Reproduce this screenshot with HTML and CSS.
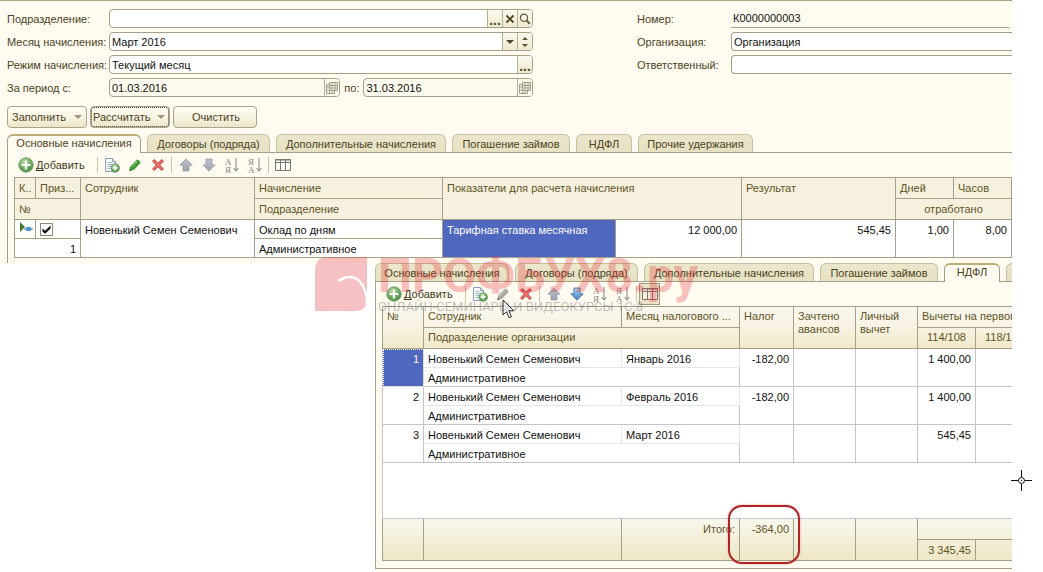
FILE: index.html
```html
<!DOCTYPE html>
<html lang="ru">
<head>
<meta charset="utf-8">
<title>Начисление зарплаты</title>
<link rel="stylesheet" href="styles.css">
</head>
<body>
<svg class="defs" width="0" height="0" aria-hidden="true">
  <defs>
    <radialGradient id="g-green" cx="40%" cy="30%" r="75%"><stop offset="0" stop-color="#b9dca2"/><stop offset=".6" stop-color="#68a85c"/><stop offset="1" stop-color="#4b8a48"/></radialGradient>
    <linearGradient id="g-grey" x1="0" y1="0" x2="0" y2="1"><stop offset="0" stop-color="#bdc1cb"/><stop offset="1" stop-color="#9ea3ae"/></linearGradient>
    <linearGradient id="g-blue" x1="0" y1="0" x2="0" y2="1"><stop offset="0" stop-color="#b9dbf5"/><stop offset="1" stop-color="#3f7fc4"/></linearGradient>
    <symbol id="i-add" viewBox="0 0 16 16"><circle cx="8" cy="8" r="7.2" fill="url(#g-green)" stroke="#6f9a66" stroke-width=".9"/><path d="M8 3.6v8.8M3.6 8h8.8" stroke="#fff" stroke-width="2.2"/></symbol>
    <symbol id="i-copy" viewBox="0 0 16 16"><path d="M1.5 1.5h7l3 3v10h-10z" fill="#f4f8fc" stroke="#8ba0b8"/><path d="M8.5 1.5v3h3" fill="#fff" stroke="#8ba0b8"/><path d="M3.5 5.5h4M3.5 7.5h6M3.5 9.5h5M3.5 11.5h3" stroke="#9db4cc"/><circle cx="11.2" cy="11" r="4.3" fill="url(#g-green)" stroke="#5e9256" stroke-width=".7"/><path d="M11.2 8.4v5.2M8.6 11h5.2" stroke="#fff" stroke-width="1.5"/></symbol>
    <symbol id="i-pencil" viewBox="0 0 16 16"><path d="M2.500 14l.7-4.300L9.400 2.900c1.800-.8 4.200 1.400 3.900 3.300L7 12.800z" fill="currentColor"/><path d="M4.800 9.600l5.400-5.600" stroke="#fff" stroke-opacity=".4" stroke-width="1.2"/><path d="M2.500 14l.4-2.300 1.900 1.700z" fill="#3f4a2a"/></symbol>
    <symbol id="i-del" viewBox="0 0 16 16"><path d="M3.2 3.2l9.6 9.8M12.8 3.2l-9.6 9.8" stroke="#cf4848" stroke-width="3.2"/><path d="M3.8 3.8l8.5 8.6M12.2 3.8l-8.5 8.6" stroke="#f3827b" stroke-width="1.1"/></symbol>
    <symbol id="i-up" viewBox="0 0 16 16"><path d="M8 1.8l6 6.4h-3V14H5V8.2H2z" fill="url(#g-grey)" stroke="#989daa" stroke-width=".8"/></symbol>
    <symbol id="i-down" viewBox="0 0 16 16"><path d="M8 14.2L2 7.8h3V2h6v5.8h3z" fill="url(#g-grey)" stroke="#989daa" stroke-width=".8"/></symbol>
    <symbol id="i-down-on" viewBox="0 0 16 16"><path d="M8 14.2L2 7.8h3V2h6v5.8h3z" fill="url(#g-blue)" stroke="#3a6ea8" stroke-width=".9"/></symbol>
    <symbol id="i-az" viewBox="0 0 16 16"><text x="1" y="7.5" class="az">А</text><text x="1" y="15.5" class="az">Я</text><path d="M12 1v12.5M9.6 11l2.4 3 2.4-3" fill="none" stroke="#9a9a98" stroke-width="1.2"/></symbol>
    <symbol id="i-za" viewBox="0 0 16 16"><text x="1" y="7.5" class="az">Я</text><text x="1" y="15.5" class="az">А</text><path d="M12 1v12.5M9.6 11l2.4 3 2.4-3" fill="none" stroke="#9a9a98" stroke-width="1.2"/></symbol>
    <symbol id="i-grid" viewBox="0 0 16 16"><path d="M.5 2.5h15v11H.5zM.5 5.5h15M5.5 2.5v11M10.5 2.5v11" fill="#fff" fill-opacity=".5" stroke="currentColor"/><path d="M.5 3h15" stroke="currentColor"/></symbol>
    <symbol id="i-cal" viewBox="0 0 12 12"><path d="M3.5.5h8v8h-8zM3.5 3.5h8M3.5 6h8M6 .5v8M9 .5v8M3.5 2.5h-3v9h8v-3M.5 5h3M.5 8h3M3.5 8.5v3M6 8.5v3" fill="none" stroke="#a19c86"/></symbol>
    <symbol id="i-lens" viewBox="0 0 12 12"><circle cx="5" cy="4.8" r="3.6" fill="#fffef8" stroke="#5e5830" stroke-width="1.2"/><path d="M7.6 7.4l3.2 3.4" stroke="#5e5830" stroke-width="1.9"/></symbol>
    <symbol id="i-x" viewBox="0 0 12 12"><path d="M2.5 2.5l7 7M9.5 2.5l-7 7" stroke="#4e4820" stroke-width="1.9"/></symbol>
    <symbol id="i-drop" viewBox="0 0 12 12"><path d="M2 4h8L6 8z" fill="currentColor"/></symbol>
    <symbol id="i-spin" viewBox="0 0 12 12"><path d="M3 4l3-3 3 3zM3 8l3 3 3-3z" fill="#5e5830"/></symbol>
  </defs>
</svg>

<main class="screen">
  <section class="doc">
    <form class="form">
      <div class="col">
        <div class="row"><label for="dep">Подразделение:</label>
          <div class="field"><input id="dep" type="text"><button type="button" class="dots" aria-label="Выбрать">...</button><button type="button" aria-label="Очистить"><svg><use href="#i-x"/></svg></button><button type="button" aria-label="Открыть"><svg><use href="#i-lens"/></svg></button></div></div>
        <div class="row"><label for="month">Месяц начисления:</label>
          <div class="field"><input id="month" type="text" value="Март 2016"><button type="button" class="dark" aria-label="Список"><svg><use href="#i-drop"/></svg></button><button type="button" aria-label="Изменить"><svg><use href="#i-spin"/></svg></button></div></div>
        <div class="row"><label for="mode">Режим начисления:</label>
          <div class="field"><input id="mode" type="text" value="Текущий месяц"><button type="button" class="dots" aria-label="Выбрать">...</button></div></div>
        <div class="row"><label for="from">За период с:</label>
          <div class="period">
            <div class="field ro"><input id="from" type="text" value="01.03.2016"><button type="button" aria-label="Календарь"><svg><use href="#i-cal"/></svg></button></div>
            <label for="to">по:</label>
            <div class="field ro last"><input id="to" type="text" value="31.03.2016"><button type="button" aria-label="Календарь"><svg><use href="#i-cal"/></svg></button></div>
          </div></div>
      </div>
      <div class="col right">
        <div class="row"><label for="num">Номер:</label><div class="field line"><input id="num" type="text" value="К0000000003"></div></div>
        <div class="row"><label for="org">Организация:</label><div class="field cut"><input id="org" type="text" value="Организация"></div></div>
        <div class="row"><label for="resp">Ответственный:</label><div class="field cut"><input id="resp" type="text"></div></div>
      </div>
    </form>

    <div class="actions">
      <button type="button" class="btn">Заполнить<svg><use href="#i-drop"/></svg></button>
      <button type="button" class="btn focus">Рассчитать<svg><use href="#i-drop"/></svg></button>
      <button type="button" class="btn clear">Очистить</button>
    </div>

    <nav class="tabs inset">
      <button type="button" class="tab on w1">Основные начисления</button>
      <button type="button" class="tab w2">Договоры (подряда)</button>
      <button type="button" class="tab w3">Дополнительные начисления</button>
      <button type="button" class="tab w4">Погашение займов</button>
      <button type="button" class="tab w5">НДФЛ</button>
      <button type="button" class="tab w6">Прочие удержания</button>
    </nav>
    <div class="pane first">
      <div class="tools">
        <button type="button" class="add"><svg><use href="#i-add"/></svg><span><u>Д</u>обавить</span></button>
        <i class="sep"></i>
        <button type="button" aria-label="Скопировать"><svg><use href="#i-copy"/></svg></button>
        <button type="button" class="green" aria-label="Изменить"><svg><use href="#i-pencil"/></svg></button>
        <button type="button" aria-label="Удалить"><svg><use href="#i-del"/></svg></button>
        <i class="sep"></i>
        <button type="button" aria-label="Вверх"><svg><use href="#i-up"/></svg></button>
        <button type="button" aria-label="Вниз"><svg><use href="#i-down"/></svg></button>
        <button type="button" aria-label="По возрастанию"><svg><use href="#i-az"/></svg></button>
        <button type="button" aria-label="По убыванию"><svg><use href="#i-za"/></svg></button>
        <i class="sep"></i>
        <button type="button" class="slate" aria-label="Настройка списка"><svg><use href="#i-grid"/></svg></button>
      </div>
      <table class="grid accruals">
        <colgroup><col class="c21"><col class="c45"><col class="c174"><col class="c188"><col class="c173"><col><col class="c154"><col class="c58"><col class="c58"></colgroup>
        <thead>
          <tr><th>К..</th><th>Приз...</th><th rowspan="2">Сотрудник</th><th>Начисление</th><th rowspan="2" colspan="2">Показатели для расчета начисления</th><th rowspan="2">Результат</th><th>Дней</th><th>Часов</th></tr>
          <tr><th colspan="2">№</th><th>Подразделение</th><th colspan="2" class="mid">отработано</th></tr>
        </thead>
        <tbody>
          <tr><td class="mark"><svg viewBox="0 0 15 12"><path d="M1 0v10l5-5z" fill="#3f7a35"/><path d="M5 7h9" stroke="#4a6f94"/><ellipse cx="9.5" cy="7" rx="3" ry="2.2" fill="#4e94cf"/></svg></td><td class="mark"><input type="checkbox" checked aria-label="Признак"></td><td rowspan="2">Новенький Семен Семенович</td><td>Оклад по дням</td><td rowspan="2" class="sel">Тарифная ставка месячная</td><td rowspan="2" class="num plain">12 000,00</td><td rowspan="2" class="num">545,45</td><td rowspan="2" class="num">1,00</td><td rowspan="2" class="num">8,00</td></tr>
          <tr><td colspan="2" class="num">1</td><td>Административное</td></tr>
        </tbody>
      </table>
    </div>
  </section>

  <section class="doc overlay">
    <nav class="tabs">
      <button type="button" class="tab w1">Основные начисления</button>
      <button type="button" class="tab w2">Договоры (подряда)</button>
      <button type="button" class="tab w3">Дополнительные начисления</button>
      <button type="button" class="tab w4">Погашение займов</button>
      <button type="button" class="tab on w5">НДФЛ</button>
      <button type="button" class="tab w6" aria-label="Прочие удержания"></button>
    </nav>
    <div class="pane second">
      <div class="tools">
        <button type="button" class="add"><svg><use href="#i-add"/></svg><span><u>Д</u>обавить</span></button>
        <i class="sep"></i>
        <button type="button" aria-label="Скопировать"><svg><use href="#i-copy"/></svg></button>
        <button type="button" class="dim" aria-label="Изменить"><svg><use href="#i-pencil"/></svg></button>
        <button type="button" aria-label="Удалить"><svg><use href="#i-del"/></svg></button>
        <i class="sep"></i>
        <button type="button" aria-label="Вверх"><svg><use href="#i-up"/></svg></button>
        <button type="button" aria-label="Вниз"><svg><use href="#i-down-on"/></svg></button>
        <button type="button" aria-label="По возрастанию"><svg><use href="#i-az"/></svg></button>
        <button type="button" aria-label="По убыванию"><svg><use href="#i-za"/></svg></button>
        <i class="sep"></i>
        <button type="button" class="slate pressed" aria-label="Настройка списка"><svg><use href="#i-grid"/></svg></button>
      </div>
      <table class="grid tax">
        <colgroup><col class="c41"><col class="c198"><col class="c118"><col class="c54"><col class="c62"><col class="c62"><col class="c58"><col></colgroup>
        <thead>
          <tr><th rowspan="2">№</th><th>Сотрудник</th><th>Месяц налогового ...</th><th rowspan="2">Налог</th><th rowspan="2">Зачтено авансов</th><th rowspan="2">Личный вычет</th><th colspan="2" class="open">Вычеты на первог</th></tr>
          <tr><th colspan="2">Подразделение организации</th><th class="mid">114/108</th><th class="open code">118/1</th></tr>
        </thead>
        <tbody>
          <tr><td rowspan="2" class="num sel dotted">1</td><td class="soft">Новенький Семен Семенович</td><td class="soft">Январь 2016</td><td rowspan="2" class="num">-182,00</td><td rowspan="2"></td><td rowspan="2"></td><td rowspan="2" class="num">1 400,00</td><td rowspan="2" class="open"></td></tr>
          <tr><td colspan="2">Административное</td></tr>
          <tr><td rowspan="2" class="num">2</td><td class="soft">Новенький Семен Семенович</td><td class="soft">Февраль 2016</td><td rowspan="2" class="num">-182,00</td><td rowspan="2"></td><td rowspan="2"></td><td rowspan="2" class="num">1 400,00</td><td rowspan="2" class="open"></td></tr>
          <tr><td colspan="2">Административное</td></tr>
          <tr><td rowspan="2" class="num">3</td><td class="soft">Новенький Семен Семенович</td><td class="soft">Март 2016</td><td rowspan="2"></td><td rowspan="2"></td><td rowspan="2"></td><td rowspan="2" class="num">545,45</td><td rowspan="2" class="open"></td></tr>
          <tr><td colspan="2">Административное</td></tr>
          <tr class="blank"><td colspan="8" class="open"></td></tr>
        </tbody>
        <tfoot>
          <tr><td rowspan="2"></td><td rowspan="2"></td><td rowspan="2" class="num total">Итого:</td><td rowspan="2" class="num ringed">-364,00<span class="ring"></span></td><td rowspan="2"></td><td rowspan="2"></td><td colspan="2" class="open"></td></tr>
          <tr><td class="num">3 345,45</td><td class="open"></td></tr>
        </tfoot>
      </table>
    </div>
    <svg class="pointer" viewBox="0 0 13 20"><path d="M1 1v15l3.500-3.300 2.600 6 2.400-1-2.600-5.900h4.800z" fill="#fff" stroke="#222"/></svg>
  </section>

  <div class="brand">
    <svg viewBox="0 0 52 54"><path d="M13 0h39v42q0 12-12 12H0V14Q0 0 13 0z" fill="#e2262e"/><path d="M23 24q16-10 25 5q4 8 4 18" fill="none" stroke="#fff" stroke-width="2.5"/></svg>
    <div><strong>ПРОФБУХ8.ру</strong><span>ОНЛАЙН-СЕМИНАРЫ И ВИДЕОКУРСЫ 1С:8</span></div>
  </div>
  <svg class="cross" viewBox="0 0 21 21"><path d="M10.500 0v7M10.500 14v7M0 10.500h7M14 10.500h7" stroke="#111" stroke-width="1"/><circle cx="10.500" cy="10.500" r="3" fill="#fff" stroke="#111"/><circle cx="10.500" cy="10.500" r=".7"/></svg>
</main>
</body>
</html>
```

FILE: styles.css
```css
* { box-sizing: border-box; }
body {
  margin: 0;
  background: #fff;
  color: #111;
  font: 11px/14px "Liberation Sans", Arial, sans-serif;
}
button, input { font: inherit; color: inherit; }
button { margin: 0; padding: 0; border: 0; background: none; }
svg { display: block; flex: none; }
u { text-decoration-skip-ink: none; }
.defs { position: absolute; }
.az { font: 9px "Liberation Serif", serif; fill: #858585; }

.screen { position: relative; padding-right: 31px; overflow: hidden; }
.doc { background: #fffbf0; }
.doc:first-child { border-top: 1px solid #a9a284; }

/* Form */
.form {
  display: grid;
  grid-template-columns: 526fr 375fr;
  gap: 104px;
  padding: 8px 0 0 7px;
  color: #4a431c;
}
.col { display: grid; gap: 4px; align-content: start; min-width: 0; }
.row { display: grid; grid-template-columns: 102px minmax(0, 1fr); align-items: center; white-space: nowrap; }
.right .row { grid-template-columns: 94px minmax(0, 1fr); }
.field {
  display: flex;
  height: 19px;
  overflow: hidden;
  border: 1px solid #a5a087;
  border-radius: 4px;
  background: #fff;
}
.field input {
  flex: 1;
  min-width: 0;
  padding: 0 2px;
  border: 0;
  outline: 0;
  background: none;
  color: #111;
}
.field button {
  display: grid;
  place-items: center;
  width: 15px;
  border-left: 1px solid #b5b094;
  background: linear-gradient(#fbf9ee, #eeead0);
  color: #4e4820;
}
.field svg { width: 12px; height: 12px; }
.field .dots { padding-top: 3px; font-size: 14px; font-weight: bold; }
.field.ro, .field.ro button { background: #fdfaee; }
.field.cut { border-right: 0; border-radius: 4px 0 0 4px; }
.field.line { margin-right: 3px; border-width: 0 0 1px; border-radius: 0; background: none; }
.period { display: grid; grid-template-columns: minmax(0, 232fr) auto minmax(0, 170fr); gap: 4px; align-items: center; }

.actions { display: flex; gap: 3px; padding: 9px 0 6px 7px; }
.btn {
  display: flex;
  align-items: center;
  justify-content: space-between;
  width: 80px;
  height: 22px;
  padding: 0 2px 0 4px;
  border: 1px solid #aaa58a;
  border-radius: 4px;
  background: linear-gradient(#fffdf6, #f7f3e0 55%, #ebe5c8);
  color: #4a431c;
}
.btn svg { width: 12px; height: 12px; color: #9c977c; }
.btn.focus { padding-left: 2px; outline: 1px dotted #333; outline-offset: -2px; }
.btn.clear { width: 84px; justify-content: center; }

/* Tabs */
.tabs {
  display: flex;
  gap: 6px;
  height: 19px;
  border-bottom: 1px solid #a5a087;
  clip-path: inset(0);
}
.tabs.inset { margin-left: 7px; }
.tab {
  flex: none;
  height: 18px;
  border: 1px solid #c6c0a0;
  border-bottom: 0;
  border-radius: 6px 6px 0 0;
  background: linear-gradient(#ebe7cd, #e6e1c2);
  color: #4a431c;
}
.tab.on { height: 19px; padding-bottom: 3px; border-color: #a5a087; border-top: 2px solid #bcae74; background: #fffbf0; }
.w1 { width: 134px; }
.w2 { width: 123px; }
.w3 { width: 170px; }
.w4 { width: 118px; }
.w5 { width: 56px; }
.w6 { width: 115px; }

/* Command bars */
.pane { border-left: 1px solid #a5a087; padding-left: 6px; }
.first { margin-left: 7px; padding-bottom: 5px; }
.tools { display: flex; align-items: center; height: 24px; }
.tools button { display: grid; place-items: center; width: 23px; height: 22px; }
.tools svg { width: 16px; height: 16px; }
.tools .add { display: flex; gap: 2px; width: 81px; padding-left: 4px; color: #3f3817; }
.sep { width: 1px; height: 16px; margin: 0 2px; background: #cbc5aa; }
.green { color: #3d9a2e; }
.dim { color: #a3a79c; }
.slate { color: #77786f; }
.tools .pressed { width: 21px; border: 1px solid #a5997d; background: #e9e2c6; color: #8b6d68; }

/* Tables */
.grid { width: 100%; border-collapse: collapse; table-layout: fixed; }
.grid th, .grid td {
  height: 19px;
  padding: 3px 4px 0;
  border: 1px solid #a5a087;
  overflow: hidden;
  vertical-align: top;
  text-align: left;
  font-weight: normal;
  white-space: nowrap;
}
.grid th { height: 21px; color: #5e5424; }
.grid tbody { background: #fff; }
.accruals thead { background: #f6f1df; }
.tax thead { background: linear-gradient(#f9f8f0, #f8f2e2 50%, #efe8c8); }
.grid tfoot { background: linear-gradient(#f8f8ee, #f3efd8 50%, #ede6c6); color: #5e5424; }
.grid .mid { text-align: center; }
.grid .num { text-align: right; }
.grid .sel { background: #5067c0; color: #fff; }
.grid .plain { border-left: 0; }
.grid .mark { padding: 2px 4px 0; }
.mark svg { width: 15px; height: 12px; }
.mark input {
  display: grid;
  place-items: center;
  appearance: none;
  width: 13px;
  height: 13px;
  margin: 1px 0 0;
  border: 1px solid #8e8a76;
  background: #fff;
}
.mark input::before {
  content: "";
  width: 9px;
  height: 9px;
  background: #111;
  clip-path: polygon(5% 40%, 35% 65%, 95% 5%, 95% 38%, 35% 98%, 5% 72%);
}
.c21 { width: 21px; } .c41 { width: 41px; } .c45 { width: 45px; }
.c54 { width: 54px; } .c58 { width: 58px; } .c62 { width: 62px; }
.c118 { width: 118px; } .c154 { width: 154px; } .c173 { width: 173px; }
.c174 { width: 174px; } .c188 { width: 188px; } .c198 { width: 198px; }

.overlay { position: relative; margin-left: 375px; padding-bottom: 2px; overflow: hidden; }
.second { border-bottom: 1px solid #a5a087; padding-bottom: 7px; }
.tax th { white-space: normal; line-height: 13px; }
.tax th.open { padding-right: 0; white-space: nowrap; }
.tax .code { padding-left: 9px; }
.tax .open { border-right: 0; }
.tax tbody td { border-color: #c3c5c8; }
.tax tbody .soft { border-bottom-color: #e2e6ee; border-right-color: #e2e6ee; }
.tax .dotted { outline: 1px dotted #fff; outline-offset: -1px; }
.tax .blank td { height: 56px; }
.tax tfoot td { height: 21px; }
.tax .ringed { position: relative; overflow: visible; }
.ring {
  position: absolute;
  inset: -14px -7px -4px -12px;
  border: 2px solid #b02323;
  border-radius: 14px;
  box-shadow: 0 0 2px #d88;
}

/* Free-floating marks */
.pointer { position: absolute; left: 127px; top: 36px; width: 13px; height: 20px; }
.cross { position: absolute; right: 11px; top: 470px; width: 21px; height: 21px; }
.brand {
  position: absolute;
  left: 315px;
  top: 257px;
  display: flex;
  gap: 11px;
  opacity: .28;
  color: #e2262e;
  white-space: nowrap;
  pointer-events: none;
}
.brand > svg { width: 52px; height: 54px; }
.brand strong { display: block; font: bold 48px/38px Roboto, sans-serif; }
.brand span { display: block; margin-top: 4px; color: #333; font: 13px/16px Roboto, sans-serif; }
```
